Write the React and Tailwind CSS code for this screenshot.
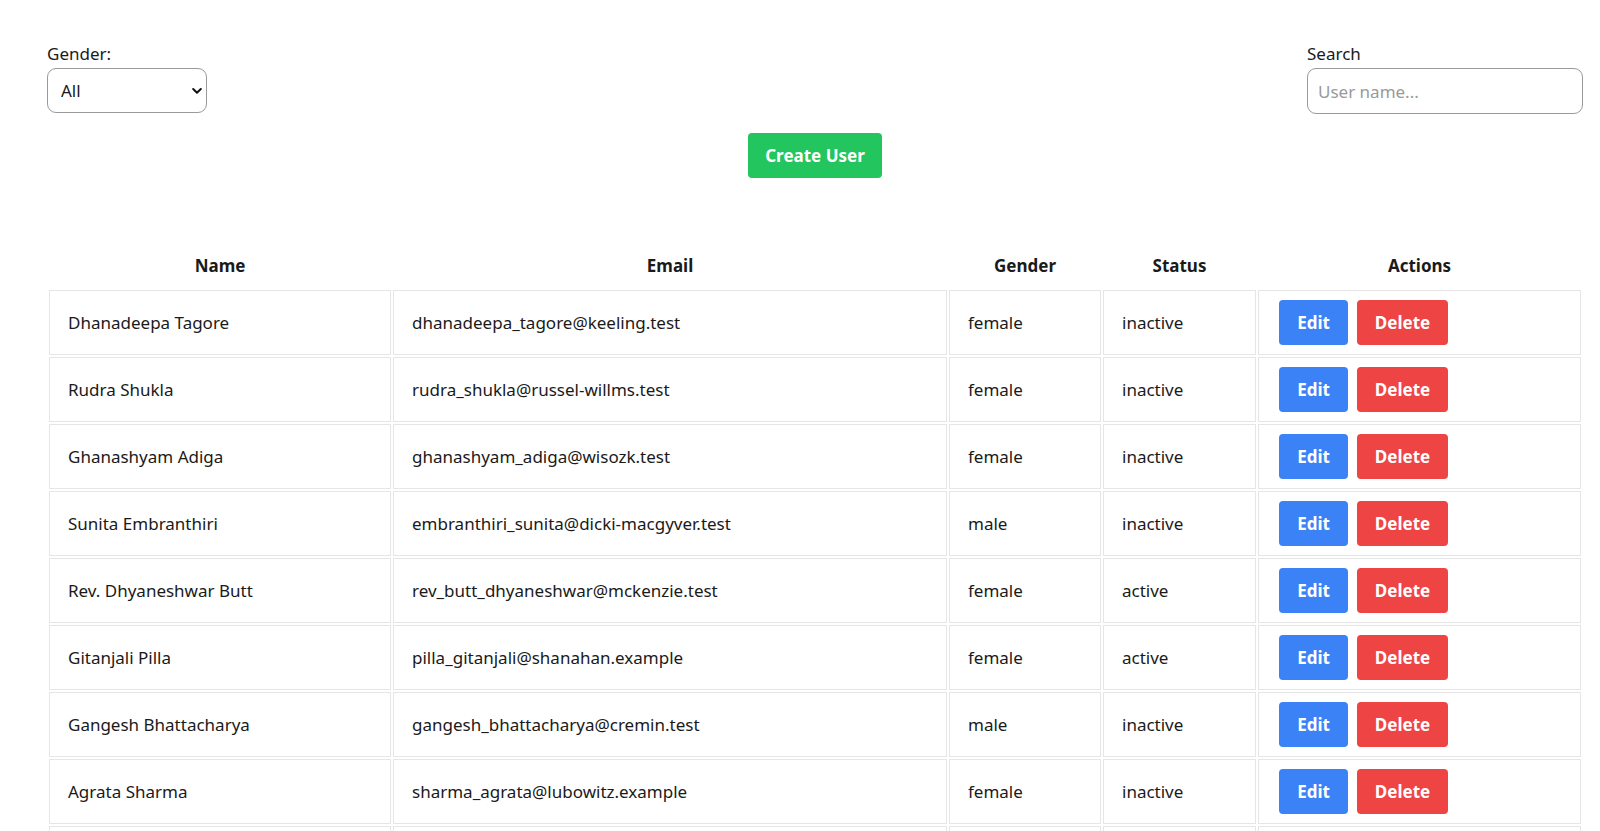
import React from "react";

const users = [
  ["Dhanadeepa Tagore", "dhanadeepa_tagore@keeling.test", "female", "inactive"],
  ["Rudra Shukla", "rudra_shukla@russel-willms.test", "female", "inactive"],
  ["Ghanashyam Adiga", "ghanashyam_adiga@wisozk.test", "female", "inactive"],
  ["Sunita Embranthiri", "embranthiri_sunita@dicki-macgyver.test", "male", "inactive"],
  ["Rev. Dhyaneshwar Butt", "rev_butt_dhyaneshwar@mckenzie.test", "female", "active"],
  ["Gitanjali Pilla", "pilla_gitanjali@shanahan.example", "female", "active"],
  ["Gangesh Bhattacharya", "gangesh_bhattacharya@cremin.test", "male", "inactive"],
  ["Agrata Sharma", "sharma_agrata@lubowitz.example", "female", "inactive"],
  ["Sumitra Nair", "nair_sumitra@kessler.test", "male", "active"],
];

export default function App() {
  return (
    <div
      className="min-h-screen bg-white text-[17px] text-[#1a1a1a] pl-[47px] pr-[17px] pt-[42px]"
      style={{ fontFamily: '"Segoe UI", "Noto Sans", "Open Sans", sans-serif' }}
    >
      <div className="flex justify-between items-start">
        <div className="flex flex-col">
          <label className="leading-6 h-[26px]">Gender:</label>
          <div className="relative w-[160px] h-[45px]">
            <select className="appearance-none w-full h-full rounded-[9px] border border-[#9a9a9a] pl-[13px] pr-8 bg-white text-[17px] text-[#1a1a1a] outline-none">
              <option>All</option>
              <option>Male</option>
              <option>Female</option>
            </select>
            <svg
              className="absolute right-[5px] top-1/2 -translate-y-1/2 pointer-events-none"
              width="10"
              height="7"
              viewBox="0 0 10 7"
            >
              <path d="M1.2 1.5 L5 5.2 L8.8 1.5" fill="none" stroke="#111" strokeWidth="2" strokeLinecap="round" strokeLinejoin="round" />
            </svg>
          </div>
        </div>
        <div className="flex flex-col">
          <label className="leading-6 h-[26px]">Search</label>
          <input
            placeholder="User name..."
            className="w-[276px] h-[46px] rounded-[9px] border border-[#9a9a9a] px-[10px] text-[17px] outline-none placeholder:text-[#9a9a9a]"
          />
        </div>
      </div>

      <div className="flex justify-center mt-[19px]">
        <button className="h-[45px] w-[134px] rounded bg-[#22c55e] text-white font-bold text-[17px]">
          Create User
        </button>
      </div>

      <table className="w-full mt-[64px] border-separate border-spacing-[2px]">
        <thead>
          <tr>
            <th className="py-[10px] leading-6 font-bold w-[342px]">Name</th>
            <th className="py-[10px] leading-6 font-bold w-[554px]">Email</th>
            <th className="py-[10px] leading-6 font-bold w-[152px]">Gender</th>
            <th className="py-[10px] leading-6 font-bold w-[153px]">Status</th>
            <th className="py-[10px] leading-6 font-bold">Actions</th>
          </tr>
        </thead>
        <tbody>
          {users.map((u, i) => (
            <tr key={i}>
              <td className="border border-[#e6e6e6] px-[18px] py-[9px] leading-6">{u[0]}</td>
              <td className="border border-[#e6e6e6] px-[18px] py-[9px] leading-6">{u[1]}</td>
              <td className="border border-[#e6e6e6] px-[18px] py-[9px] leading-6">{u[2]}</td>
              <td className="border border-[#e6e6e6] px-[18px] py-[9px] leading-6">{u[3]}</td>
              <td className="border border-[#e6e6e6] pl-[20px] pr-[18px] py-[9px]">
                <div className="flex gap-[9px]">
                  <button className="h-[45px] w-[69px] rounded bg-[#3b82f6] text-white font-bold text-[17px]">
                    Edit
                  </button>
                  <button className="h-[45px] w-[91px] rounded bg-[#ef4444] text-white font-bold text-[17px]">
                    Delete
                  </button>
                </div>
              </td>
            </tr>
          ))}
        </tbody>
      </table>
    </div>
  );
}
